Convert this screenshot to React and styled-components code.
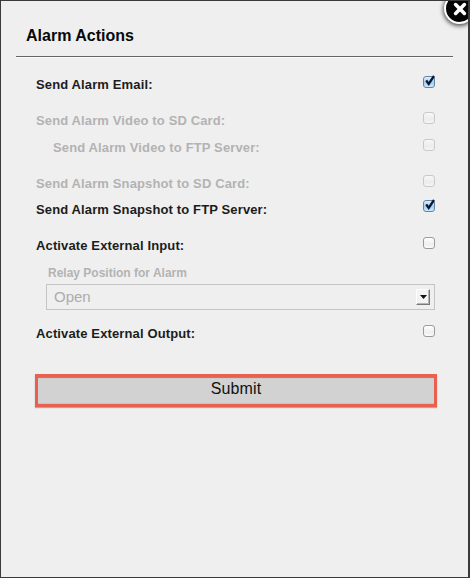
import React from "react";
import styled, { createGlobalStyle } from "styled-components";

const GlobalStyle = createGlobalStyle`
  * { box-sizing: border-box; }
  body { margin: 0; background: #efefef; font-family: "Liberation Sans", Arial, sans-serif; }
`;

const Panel = styled.main`
  position: relative;
  width: 470px;
  height: 578px;
  overflow: hidden;
  padding: 0 15px;
  background: #efefef;
  border: 1px solid #3a3a3a;
  border-right-width: 2px;
`;

const Title = styled.h1`
  width: 437px;
  height: 56px;
  margin: 0;
  padding: 25px 0 0 10px;
  border-bottom: 1px solid #666;
  box-shadow: 0 1px 0 #fafafa;
  font-size: 16px;
  line-height: 20px;
  color: #080808;
`;

const Form = styled.form`
  display: flex;
  flex-direction: column;
  width: 419px;
  padding: 20px 0 0 20px;
`;

const Row = styled.label`
  display: flex;
  justify-content: space-between;
  align-items: flex-start;
  height: 16px;
  margin-top: ${(p) => p.$gap || 0}px;
  padding-left: ${(p) => (p.$indent ? 17 : 0)}px;
  color: ${(p) => (p.$disabled ? "#b3b3b3" : "#1c1c1c")};
  font-size: 13px;
  font-weight: bold;
  line-height: 16px;
  letter-spacing: 0.13px;
  white-space: nowrap;
`;

const Box = styled.span`
  display: block;
  width: 12px;
  height: 12px;
  margin-top: ${(p) => p.$shift || 0}px;
  border: 1px solid ${(p) => (p.$checked ? "#6683a6" : p.$disabled ? "#c9c9c9" : "#9b9b9b")};
  border-radius: 3px;
  background: ${(p) =>
    p.$checked
      ? "linear-gradient(#e2effb, #a7cdf0 55%, #cbe8fb)"
      : p.$disabled
      ? "linear-gradient(#f7f7f7, #ececec 60%, #f5f5f5)"
      : "linear-gradient(#fff, #eee 60%, #fafafa)"};
  svg { display: block; margin: -2px 0 0 0; overflow: visible; }
`;

const RelayLabel = styled.div`
  margin: 11px 0 0 12px;
  height: 16px;
  color: #b3b3b3;
  font-size: 12px;
  font-weight: bold;
  line-height: 16px;
`;

const Select = styled.div`
  display: flex;
  align-items: center;
  justify-content: space-between;
  height: 26px;
  margin: 3px 0 0 10px;
  padding: 0 4px 0 7px;
  border: 1px solid #c4c4c4;
  color: #acacac;
  font-size: 15px;
  line-height: 24px;
`;

const Arrow = styled.span`
  display: flex;
  align-items: center;
  justify-content: center;
  width: 14px;
  height: 16px;
  background: #f3f3f3;
  border: 1px solid;
  border-color: #fff #777 #777 #fff;
  box-shadow: inset -1px -1px 0 #b5b5b5;
`;

const Submit = styled.button`
  width: 402px;
  height: 33px;
  margin: 32px 0 0 -1px;
  padding: 0 0 4px;
  border: 3px solid #e9604f;
  background: #d2d2d2;
  box-shadow: inset 0 2px 1px -1px #858585, inset 0 -1px 0 #efb5ad, 0 1px 1px #aaa;
  color: #111;
  font: 16px/20px "Liberation Sans", Arial, sans-serif;
  letter-spacing: 0.1px;
`;

const Close = styled.button`
  position: absolute;
  top: -8px;
  right: -7px;
  display: flex;
  align-items: center;
  justify-content: center;
  width: 31px;
  height: 31px;
  padding: 1px 0 0;
  border: 2px solid #fff;
  border-radius: 50%;
  background: #050505;
  box-shadow: 0 1px 4px 1px rgba(0, 0, 0, 0.65);
  svg { display: block; flex: none; }
`;

function Check({ checked, disabled, shift }) {
  return (
    <Box $checked={checked} $disabled={disabled} $shift={shift}>
      {checked && (
        <svg width="12" height="12" viewBox="0 0 12 12" fill="none">
          <path d="M2.2 5.4 4.7 9 10 1" stroke="#071b38" strokeWidth="2.3" />
        </svg>
      )}
    </Box>
  );
}

function Option({ label, gap, indent, disabled, checked, shift = -1 }) {
  return (
    <Row $gap={gap} $indent={indent} $disabled={disabled}>
      {label}
      <Check checked={checked} disabled={disabled} shift={shift} />
    </Row>
  );
}

export default function App() {
  return (
    <Panel>
      <GlobalStyle />
      <Title>Alarm Actions</Title>
      <Form>
        <Option label="Send Alarm Email:" checked />
        <Option label="Send Alarm Video to SD Card:" gap={20} disabled />
        <Option label="Send Alarm Video to FTP Server:" gap={11} indent disabled />
        <Option label="Send Alarm Snapshot to SD Card:" gap={20} disabled />
        <Option label="Send Alarm Snapshot to FTP Server:" gap={10} checked shift={-2} />
        <Option label="Activate External Input:" gap={20} />
        <RelayLabel>Relay Position for Alarm</RelayLabel>
        <Select>
          Open
          <Arrow>
            <svg width="7" height="4" viewBox="0 0 7 4">
              <path d="M0 0h7L3.5 4z" fill="#111" />
            </svg>
          </Arrow>
        </Select>
        <Option label="Activate External Output:" gap={16} />
        <Submit type="button">Submit</Submit>
      </Form>
      <Close type="button" aria-label="Close">
        <svg width="14" height="14" viewBox="0 0 14 14">
          <path d="m2.6 2.6 8.8 8.8M11.4 2.6l-8.8 8.8" stroke="#fff" strokeWidth="3.6" strokeLinecap="round" />
        </svg>
      </Close>
    </Panel>
  );
}
